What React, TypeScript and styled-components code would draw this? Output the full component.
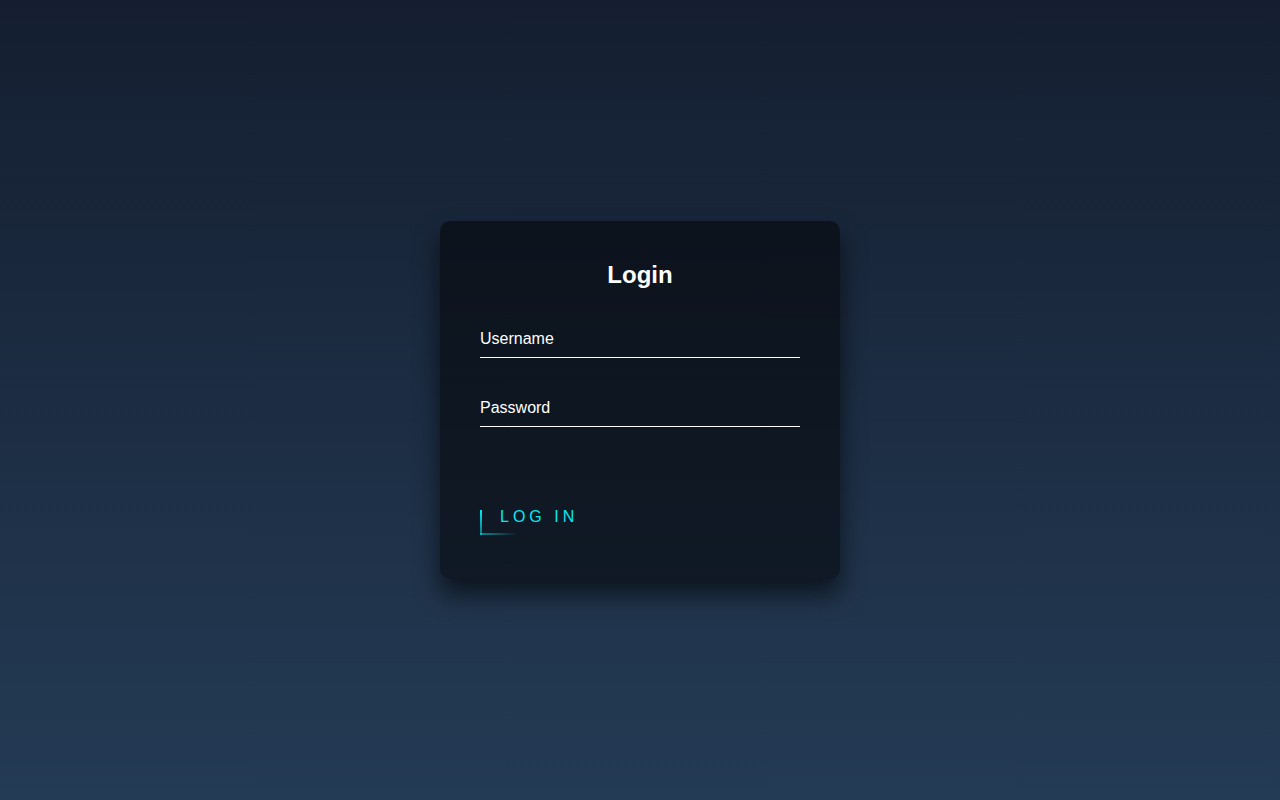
import React from 'react';
import styled, { createGlobalStyle } from 'styled-components';

const GlobalStyle = createGlobalStyle`
  html, body {
    margin: 0;
    padding: 0;
    height: 100%;
  }
  body {
    font-family: "Liberation Sans", Arial, sans-serif;
    background: linear-gradient(#141e30, #243b55);
  }
  * {
    box-sizing: border-box;
  }
`;

const Page = styled.div`
  height: 100vh;
  display: flex;
  align-items: center;
  justify-content: center;
`;

const LoginBox = styled.div`
  width: 400px;
  padding: 40px;
  background: rgba(0, 0, 0, 0.5);
  box-shadow: 0 15px 25px rgba(0, 0, 0, 0.6);
  border-radius: 10px;
`;

const Title = styled.h2`
  margin: 0 0 30px;
  padding: 0;
  color: #fff;
  text-align: center;
  font-size: 24px;
  font-weight: bold;
`;

const UserBox = styled.div`
  position: relative;
`;

const Field = styled.input`
  width: 100%;
  padding: 11px 0 9px;
  font-size: 16px;
  font-family: inherit;
  color: #fff;
  margin-bottom: 30px;
  border: none;
  border-bottom: 1px solid #fff;
  outline: none;
  background: transparent;

  &::placeholder {
    color: #fff;
    opacity: 1;
  }
`;

const SubmitLink = styled.a`
  position: relative;
  display: inline-block;
  padding: 11px 20px 9px;
  margin-top: 40px;
  color: #03e9f4;
  font-size: 16px;
  text-decoration: none;
  text-transform: uppercase;
  letter-spacing: 4px;
  overflow: hidden;
  cursor: pointer;
`;

const LineBottom = styled.span`
  position: absolute;
  left: 0;
  bottom: 0;
  width: 38px;
  height: 2px;
  background: linear-gradient(90deg, rgba(3, 233, 244, 0.55), transparent);
`;

const LineLeft = styled.span`
  position: absolute;
  left: 0;
  bottom: 0;
  width: 2px;
  height: 25px;
  background: linear-gradient(180deg, #03e9f4, rgba(3, 233, 244, 0.45));
`;

export default function App() {
  return (
    <>
      <GlobalStyle />
      <Page>
        <LoginBox>
          <Title>Login</Title>
          <form onSubmit={(e) => e.preventDefault()}>
            <UserBox>
              <Field type="text" placeholder="Username" />
            </UserBox>
            <UserBox>
              <Field type="password" placeholder="Password" />
            </UserBox>
            <SubmitLink>
              <LineBottom />
              <LineLeft />
              Log in
            </SubmitLink>
          </form>
        </LoginBox>
      </Page>
    </>
  );
}
